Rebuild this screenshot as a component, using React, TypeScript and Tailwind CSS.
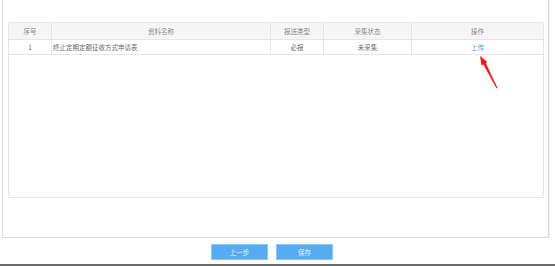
import React from 'react';

const cols = [
  { key: 'no', label: '序号', w: 'w-[43px]' },
  { key: 'name', label: '资料名称', w: 'w-[219px]' },
  { key: 'type', label: '报送类型', w: 'w-[53px]' },
  { key: 'state', label: '采集状态', w: 'w-[88px]' },
  { key: 'op', label: '操作', w: 'flex-1' },
];

const App: React.FC = () => {
  return (
    <div
      className="relative w-[555px] h-[266px] bg-white overflow-hidden"
      style={{ fontFamily: '"Noto Sans CJK SC", "Liberation Sans", sans-serif' }}
    >
      {/* outer panel */}
      <div className="ml-[2px] w-[547px] h-[238px] border-l border-r border-b border-[#dcdcdc] pt-[22px] pl-[5px] shadow-[1px_0_0_#efefef]">
        <div className="w-[536px] h-[176px] border border-[#e6e6e6] text-[6.5px] leading-none">
          <div className="flex h-[17px] bg-[#f5f5f5] border-b border-[#e6e6e6] text-[#8a8a8a]">
            {cols.map((c, i) => (
              <div
                key={c.key}
                className={`${c.w} flex items-center justify-center ${i < cols.length - 1 ? 'border-r border-[#e6e6e6]' : ''}`}
              >
                {c.label}
              </div>
            ))}
          </div>
          <div className="flex h-[15px] border-b border-[#e6e6e6] text-[#6a6a6a]">
            <div className="w-[43px] flex items-center justify-center border-r border-[#e6e6e6]">1</div>
            <div className="w-[219px] flex items-center pl-[1px] border-r border-[#e6e6e6]">终止定期定额征收方式申请表</div>
            <div className="w-[53px] flex items-center justify-center border-r border-[#e6e6e6]">必报</div>
            <div className="w-[88px] flex items-center justify-center border-r border-[#e6e6e6]">未采集</div>
            <div className="flex-1 flex items-center justify-center text-[#4aa6e6]">上传</div>
          </div>
        </div>
      </div>

      {/* buttons */}
      <div className="flex gap-[8px] pl-[211px] mt-[6px]">
        <button className="w-[57px] h-[16px] bg-[#55acf0] border border-[#8cc8f5] text-[#e8f4fd] text-[6.5px] leading-none">
          上一步
        </button>
        <button className="w-[57px] h-[16px] bg-[#55acf0] border border-[#8cc8f5] text-[#e8f4fd] text-[6.5px] leading-none">
          保存
        </button>
      </div>

      <div className="absolute left-0 top-[264px] w-full h-[2px] bg-[#6b6b6b]" />

      {/* red arrow annotation */}
      <svg className="absolute left-0 top-0" width="555" height="266" viewBox="0 0 555 266">
        <polygon points="480,56 487.5,62 485.8,63 497.5,88 496.5,88.5 483.4,64.5 481.5,65.5" fill="#f21b1b" />
      </svg>
    </div>
  );
};

export default App;
